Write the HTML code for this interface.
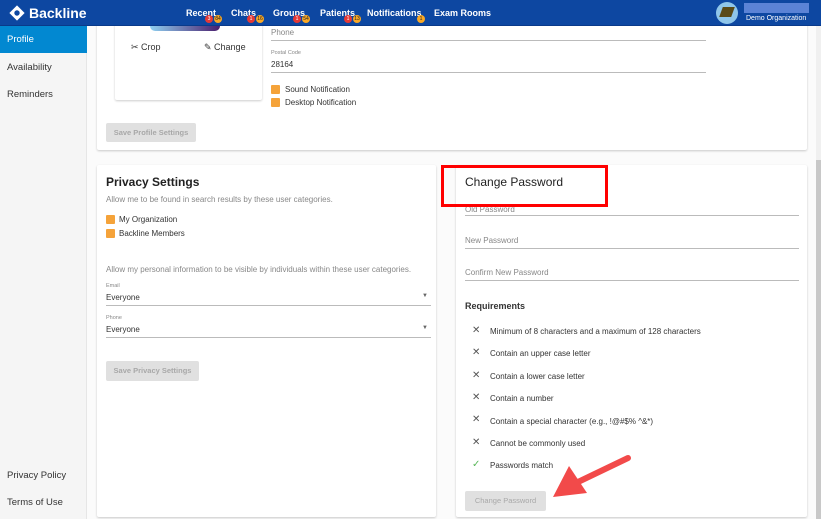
<!DOCTYPE html>
<html><head><style>
*{box-sizing:border-box;margin:0;padding:0}
body{width:821px;height:519px;overflow:hidden;font-family:"Liberation Sans",sans-serif;background:#fbfbfb;position:relative;color:#222}
.hdr{position:absolute;left:0;top:0;width:821px;height:26px;background:#0d47a1;border-bottom:1px solid #0a3a8a;z-index:10}
.logo{position:absolute;left:8px;top:4px;color:#fff;font-weight:bold;font-size:14px;display:flex;align-items:center;gap:3px}
.nav{position:absolute;top:8px;color:#fff;font-size:9px;font-weight:bold}
.b{position:absolute;top:15px;width:8px;height:8px;border-radius:50%;font-size:5px;text-align:center;line-height:8px;color:#222}
.r{background:#e53935;color:#fff}.o{background:#f9a825}
.side{position:absolute;left:0;top:26px;width:87px;height:493px;background:#f5f5f5;border-right:1px solid #e6e6e6}
.side div{position:absolute;left:7px;font-size:9.5px;color:#333}
.card{position:absolute;background:#fff;box-shadow:0 1px 2px rgba(0,0,0,.2);border-radius:2px}
.t{position:absolute;font-size:8px;color:#333}
.g{color:#888}
.line{position:absolute;height:1px;background:#bbb}
.cb{position:absolute;width:9px;height:9px;background:#f5a33a;border-radius:1px}
.btn{position:absolute;background:#e0e0e0;color:#a8a8a8;font-size:7.5px;font-weight:bold;text-align:center;border-radius:2px}
.x{position:absolute;left:472px;font-size:10px;color:#555}
</style></head><body>
<div class="hdr">
<div class="logo"><svg width="18" height="18" viewBox="0 0 20 20"><rect x="4" y="4" width="12" height="12" transform="rotate(45 10 10)" fill="#fff"/><circle cx="10" cy="10" r="3" fill="#0d47a1"/></svg>Backline</div>
<div class="nav" style="left:186px">Recent</div><div class="b r" style="left:205px">3</div><div class="b o" style="left:214px">84</div>
<div class="nav" style="left:231px">Chats</div><div class="b r" style="left:247px">1</div><div class="b o" style="left:256px">16</div>
<div class="nav" style="left:273px">Groups</div><div class="b r" style="left:293px">1</div><div class="b o" style="left:302px">54</div>
<div class="nav" style="left:320px">Patients</div><div class="b r" style="left:344px">1</div><div class="b o" style="left:353px">13</div>
<div class="nav" style="left:367px">Notifications</div><div class="b o" style="left:417px">1</div>
<div class="nav" style="left:434px">Exam Rooms</div>
<div style="position:absolute;left:716px;top:2px;width:22px;height:22px;border-radius:50%;background:#8fc6ea;overflow:hidden"><div style="position:absolute;left:5px;top:5px;width:12px;height:10px;background:#5a4a18;transform:skew(-20deg)"></div></div>
<div style="position:absolute;left:744px;top:3px;width:65px;height:10px;background:#5b83d6"></div>
<div style="position:absolute;left:746px;top:15px;color:#fff;font-size:7px">Demo Organization</div>
</div>
<div class="side">
<div style="left:0;top:0;width:87px;height:27px;background:#0288d1;color:#fff;padding:8px 7px">Profile</div>
<div style="top:36px">Availability</div><div style="top:63px">Reminders</div>
<div style="top:444px">Privacy Policy</div><div style="top:471px">Terms of Use</div>
</div>
<div style="position:absolute;left:816px;top:26px;width:5px;height:493px;background:#f0f0f0"></div>
<div style="position:absolute;left:816px;top:160px;width:5px;height:359px;background:#c8c8c8"></div>
<div class="card" style="left:97px;top:10px;width:710px;height:140px"></div>
<div class="card" style="left:115px;top:10px;width:147px;height:90px"></div>
<div style="position:absolute;left:150px;top:26px;width:70px;height:5px;border-radius:0 0 30px 30px;background:linear-gradient(90deg,#8fd0f0,#4a1e6e)"></div>
<div class="t" style="left:131px;top:42px;font-size:9px">✂ Crop</div>
<div class="t" style="left:204px;top:42px;font-size:9px">✎ Change</div>
<div class="t g" style="left:271px;top:28px">Phone</div><div class="line" style="left:271px;top:40px;width:435px"></div>
<div class="t g" style="left:271px;top:50px;font-size:5.5px">Postal Code</div>
<div class="t" style="left:271px;top:60px">28164</div><div class="line" style="left:271px;top:72px;width:435px"></div>
<div class="cb" style="left:271px;top:85px"></div><div class="t" style="left:285px;top:85px">Sound Notification</div>
<div class="cb" style="left:271px;top:98px"></div><div class="t" style="left:285px;top:98px">Desktop Notification</div>
<div class="btn" style="left:106px;top:123px;width:90px;height:19px;line-height:19px">Save Profile Settings</div>

<div class="card" style="left:97px;top:165px;width:339px;height:352px"></div>
<div class="t" style="left:106px;top:175px;font-size:12px;font-weight:bold;color:#222">Privacy Settings</div>
<div class="t g" style="left:106px;top:195px">Allow me to be found in search results by these user categories.</div>
<div class="cb" style="left:106px;top:215px"></div><div class="t" style="left:119px;top:215px">My Organization</div>
<div class="cb" style="left:106px;top:229px"></div><div class="t" style="left:119px;top:229px">Backline Members</div>
<div class="t g" style="left:106px;top:265px">Allow my personal information to be visible by individuals within these user categories.</div>
<div class="t g" style="left:106px;top:283px;font-size:5.5px">Email</div>
<div class="t" style="left:106px;top:293px">Everyone</div><div class="t" style="left:422px;top:293px;font-size:6px;color:#666">▼</div>
<div class="line" style="left:106px;top:305px;width:325px"></div>
<div class="t g" style="left:106px;top:315px;font-size:5.5px">Phone</div>
<div class="t" style="left:106px;top:325px">Everyone</div><div class="t" style="left:422px;top:325px;font-size:6px;color:#666">▼</div>
<div class="line" style="left:106px;top:337px;width:325px"></div>
<div class="btn" style="left:106px;top:361px;width:93px;height:20px;line-height:20px">Save Privacy Settings</div>

<div class="card" style="left:456px;top:165px;width:351px;height:352px"></div>
<div class="t" style="left:465px;top:175px;font-size:12px;color:#222">Change Password</div>
<div class="t g" style="left:465px;top:205px">Old Password</div><div class="line" style="left:465px;top:215px;width:334px"></div>
<div class="t g" style="left:465px;top:236px">New Password</div><div class="line" style="left:465px;top:248px;width:334px"></div>
<div class="t g" style="left:465px;top:268px">Confirm New Password</div><div class="line" style="left:465px;top:280px;width:334px"></div>
<div class="t" style="left:465px;top:301px;font-size:9px;font-weight:bold">Requirements</div>
<div class="x" style="top:325px">✕</div><div class="t" style="left:490px;top:327px">Minimum of 8 characters and a maximum of 128 characters</div>
<div class="x" style="top:347px">✕</div><div class="t" style="left:490px;top:349px">Contain an upper case letter</div>
<div class="x" style="top:370px">✕</div><div class="t" style="left:490px;top:372px">Contain a lower case letter</div>
<div class="x" style="top:392px">✕</div><div class="t" style="left:490px;top:394px">Contain a number</div>
<div class="x" style="top:414px">✕</div><div class="t" style="left:490px;top:417px">Contain a special character (e.g., !@#$% ^&amp;*)</div>
<div class="x" style="top:437px">✕</div><div class="t" style="left:490px;top:439px">Cannot be commonly used</div>
<div class="x" style="top:459px;color:#5cb85c">✓</div><div class="t" style="left:490px;top:461px">Passwords match</div>
<div class="btn" style="left:465px;top:491px;width:81px;height:20px;line-height:20px;font-weight:normal">Change Password</div>
<div style="position:absolute;left:441px;top:165px;width:167px;height:42px;border:3px solid #f00"></div>
<svg style="position:absolute;left:0;top:0" width="821" height="519"><line x1="628" y1="458" x2="578" y2="482" stroke="#f24a4a" stroke-width="6" stroke-linecap="round"/><polygon points="553,497 569,466 587,493" fill="#f24a4a"/></svg>
</body></html>
